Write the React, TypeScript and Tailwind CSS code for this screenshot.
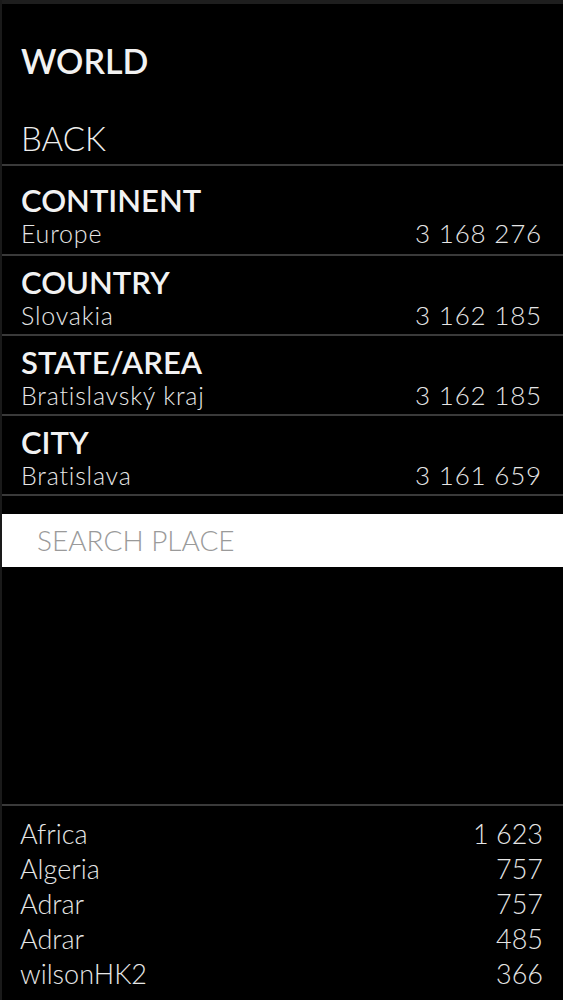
import React from "react";

const rows = [
  { title: "CONTINENT", name: "Europe", value: "3 168 276", first: true },
  { title: "COUNTRY", name: "Slovakia", value: "3 162 185" },
  { title: "STATE/AREA", name: "Bratislavský kraj", value: "3 162 185" },
  { title: "CITY", name: "Bratislava", value: "3 161 659" },
];

const list = [
  { name: "Africa", value: "1 623" },
  { name: "Algeria", value: "757" },
  { name: "Adrar", value: "757" },
  { name: "Adrar", value: "485" },
  { name: "wilsonHK2", value: "366" },
];

export default function App() {
  return (
    <div
      className="w-[563px] h-[1000px] bg-black flex flex-col border-l-2 border-[#1a1a1a] overflow-hidden"
      style={{ fontFamily: "Lato, 'Noto Sans', sans-serif" }}
    >
      <div className="h-[4px] bg-[#1e1e1e] shrink-0" />
      <div className="pt-[37px] pb-[6px] pl-[19px] border-b-2 border-[#3a3a3a]">
        <div className="text-[34px] leading-[40px] font-semibold text-[#f2f2f2]">WORLD</div>
        <div className="mt-[37px] text-[33px] leading-[40px] font-light text-[#eeeeee]">BACK</div>
      </div>
      {rows.map((r) => (
        <div
          key={r.title}
          className={`${r.first ? "pt-[16px] pb-[7px]" : "pt-[8px] pb-[5px]"} pl-[19px] pr-[21px] border-b-2 border-[#3a3a3a]`}
        >
          <div className="text-[31px] leading-[37px] font-semibold text-[#f2f2f2]">{r.title}</div>
          <div className="flex justify-between items-baseline leading-[28px] font-light text-[#e6e6e6]">
            <span className="text-[25px] tracking-[0.8px]">{r.name}</span>
            <span className="text-[26px] tracking-[0.8px]">{r.value}</span>
          </div>
        </div>
      ))}
      <div className="mt-[18px] h-[53px] bg-white flex items-center pl-[35px] shrink-0">
        <span className="text-[28px] leading-[53px] font-light text-[#9a9a9a]">SEARCH PLACE</span>
      </div>
      <div className="mt-auto border-t-2 border-[#3a3a3a] pt-[10px] pb-[9px] pl-[18px] pr-[20px]">
        {list.map((l, i) => (
          <div key={i} className="flex justify-between text-[27px] leading-[35px] font-light text-[#e6e6e6]">
            <span>{l.name}</span>
            <span>{l.value}</span>
          </div>
        ))}
      </div>
    </div>
  );
}
